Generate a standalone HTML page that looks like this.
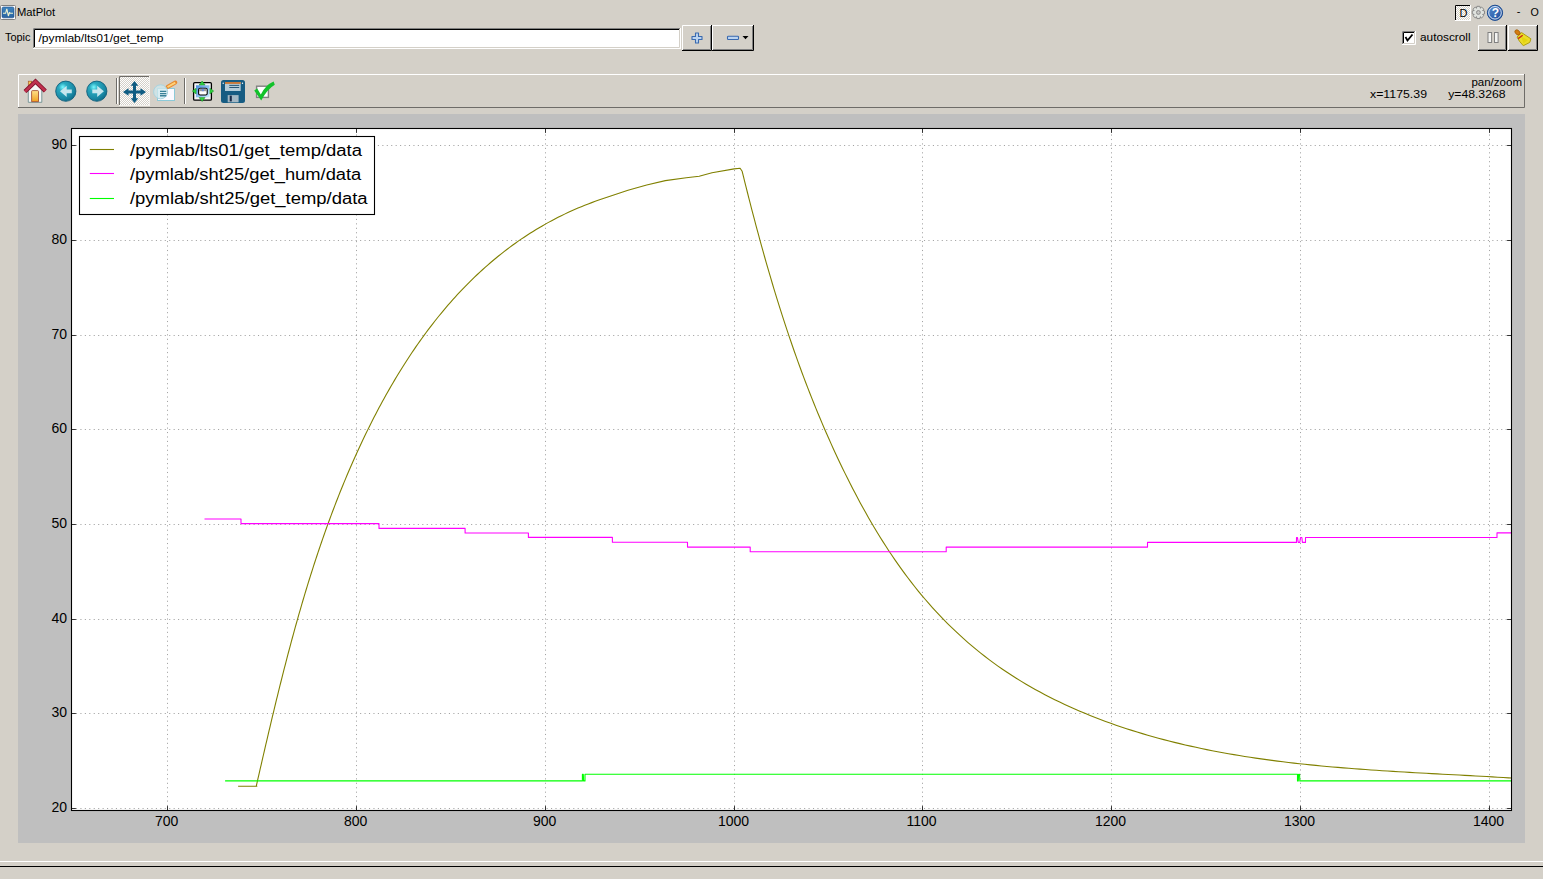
<!DOCTYPE html><html><head><meta charset="utf-8"><style>html,body{margin:0;padding:0;width:1543px;height:879px;overflow:hidden;background:#d4d0c8;font-family:"Liberation Sans",sans-serif}</style></head><body><svg width="1543" height="879" viewBox="0 0 1543 879" style="position:absolute;left:0;top:0">
<defs><pattern id="chk" width="2" height="2" patternUnits="userSpaceOnUse"><rect width="2" height="2" fill="#d4d0c8"/><rect width="1" height="1" fill="#fff"/><rect x="1" y="1" width="1" height="1" fill="#fff"/></pattern><radialGradient id="tealg" cx="0.35" cy="0.3" r="0.8"><stop offset="0" stop-color="#78f8ff"/><stop offset="0.25" stop-color="#2aaac0"/><stop offset="0.7" stop-color="#1a88a4"/><stop offset="1" stop-color="#0a6482"/></radialGradient><linearGradient id="blueg" x1="0" y1="0" x2="1" y2="1"><stop offset="0" stop-color="#5a8fd0"/><stop offset="1" stop-color="#1a4a9a"/></linearGradient><linearGradient id="doorg" x1="0" y1="0" x2="0" y2="1"><stop offset="0" stop-color="#ffe08a"/><stop offset="1" stop-color="#f0a020"/></linearGradient><clipPath id="axclip"><rect x="71.5" y="128.5" width="1440" height="682"/></clipPath></defs>
<rect width="1543" height="879" fill="#d4d0c8"/>
<rect x="0.5" y="5.5" width="15" height="14" rx="1" fill="#fff" stroke="#808080" stroke-width="1"/>
<linearGradient id="tig" x1="0" y1="0" x2="0" y2="1"><stop offset="0" stop-color="#3f85c0"/><stop offset="1" stop-color="#2a64a0"/></linearGradient><rect x="2" y="7" width="12" height="10.8" rx="1.5" fill="url(#tig)" stroke="#1a4a88" stroke-width="0.6"/>
<path d="M3,13.3 H5.6 L6.8,8.8 L8.4,16 L9.4,12.6 L10.4,13.3 H13" fill="none" stroke="#f0f4d0" stroke-width="1.1"/>
<text x="17" y="16" font-family="Liberation Sans" font-size="11" fill="#000" textLength="38" lengthAdjust="spacingAndGlyphs">MatPlot</text>
<rect x="1455" y="5" width="16" height="16" fill="url(#chk)"/>
<path d="M1455.5,21 V5.5 H1470.5" fill="none" stroke="#000" stroke-width="1"/>
<path d="M1455,20.5 H1470.5 V5" fill="none" stroke="#fff" stroke-width="1"/>
<text x="1459.5" y="17" font-family="Liberation Sans" font-size="11" fill="#000">D</text>
<path d="M1482.69,10.53 L1484.52,10.95 L1484.52,13.95 L1482.69,14.37 L1482.79,14.13 L1483.79,15.72 L1481.67,17.84 L1480.08,16.84 L1480.32,16.74 L1479.90,18.57 L1476.90,18.57 L1476.48,16.74 L1476.72,16.84 L1475.13,17.84 L1473.01,15.72 L1474.01,14.13 L1474.11,14.37 L1472.28,13.95 L1472.28,10.95 L1474.11,10.53 L1474.01,10.77 L1473.01,9.18 L1475.13,7.06 L1476.72,8.06 L1476.48,8.16 L1476.90,6.33 L1479.90,6.33 L1480.32,8.16 L1480.08,8.06 L1481.67,7.06 L1483.79,9.18 L1482.79,10.77Z" fill="#dfe2de" stroke="#858585" stroke-width="0.95" stroke-linejoin="round"/>
<circle cx="1478.4" cy="12.45" r="1.9" fill="#c8c8c6" stroke="#8a8a8a" stroke-width="1"/>
<circle cx="1495" cy="12.8" r="7.6" fill="url(#blueg)" stroke="#1a4a90" stroke-width="1"/>
<circle cx="1495" cy="12.8" r="6.3" fill="none" stroke="#fff" stroke-width="0.8"/>
<text x="1495.3" y="17.3" text-anchor="middle" font-family="Liberation Sans" font-weight="bold" font-size="12" fill="#fff">?</text>
<text x="1516.8" y="15.3" font-family="Liberation Sans" font-size="11" fill="#000">-</text>
<text x="1530.6" y="15.9" font-family="Liberation Sans" font-size="11" fill="#000" textLength="8.3" lengthAdjust="spacingAndGlyphs">O</text>
<text x="5" y="41" font-family="Liberation Sans" font-size="11" fill="#000" textLength="25.5" lengthAdjust="spacingAndGlyphs">Topic</text>
<rect x="33" y="28" width="648" height="21" fill="#fff"/>
<path d="M33.5,48 V28.5 H680" fill="none" stroke="#808080"/>
<path d="M34.5,47 V29.5 H679" fill="none" stroke="#000"/>
<path d="M34,47.5 H679.5 V29" fill="none" stroke="#d4d0c8"/>
<path d="M33,48.5 H680.5 V28" fill="none" stroke="#fff"/>
<text x="38.5" y="41.5" font-family="Liberation Sans" font-size="11" fill="#000" textLength="125" lengthAdjust="spacingAndGlyphs">/pymlab/lts01/get_temp</text>
<rect x="682" y="25" width="30" height="26" fill="#d4d0c8"/>
<path d="M682.5,50 V25.5 H711" fill="none" stroke="#fff"/>
<path d="M682,50.5 H711.5 V25" fill="none" stroke="#000" transform="translate(0,0)"/>
<path d="M683,49.5 H710.5 V26" fill="none" stroke="#808080"/>
<rect x="712" y="25" width="42" height="26" fill="#d4d0c8"/>
<path d="M712.5,50 V25.5 H753" fill="none" stroke="#fff"/>
<path d="M712,50.5 H753.5 V25" fill="none" stroke="#000" transform="translate(0,0)"/>
<path d="M713,49.5 H752.5 V26" fill="none" stroke="#808080"/>
<path d="M695.5,33 h3 v3.5 h3.5 v3 h-3.5 v3.5 h-3 v-3.5 h-3.5 v-3 h3.5z" fill="#bcd4f0" stroke="#3a6ab0" stroke-width="1.1" stroke-linejoin="round"/>
<rect x="727.5" y="36.3" width="11" height="3.2" rx="0.8" fill="#bcd4f0" stroke="#3a6ab0" stroke-width="1.1"/>
<path d="M742.5,36 h6 l-3,3.3z" fill="#000"/>
<rect x="1402" y="31" width="13" height="13" fill="#fff"/>
<path d="M1402.5,44 V31.5 H1415" fill="none" stroke="#808080"/>
<path d="M1403.5,43 V32.5 H1414" fill="none" stroke="#000"/>
<path d="M1403,43.5 H1414.5 V32" fill="none" stroke="#d4d0c8"/>
<path d="M1402,44.5 H1415.5 V31" fill="none" stroke="#fff"/>
<path d="M1405.5,37 L1407.5,40.5 L1412.5,34.5" fill="none" stroke="#000" stroke-width="1.8"/>
<text x="1420" y="40.7" font-family="Liberation Sans" font-size="11" fill="#000" textLength="50.6" lengthAdjust="spacingAndGlyphs">autoscroll</text>
<rect x="1478" y="25" width="29" height="26" fill="#d4d0c8"/>
<path d="M1478.5,50 V25.5 H1506" fill="none" stroke="#fff"/>
<path d="M1478,50.5 H1506.5 V25" fill="none" stroke="#000" transform="translate(0,0)"/>
<path d="M1479,49.5 H1505.5 V26" fill="none" stroke="#808080"/>
<rect x="1508" y="25" width="30" height="26" fill="#d4d0c8"/>
<path d="M1508.5,50 V25.5 H1537" fill="none" stroke="#fff"/>
<path d="M1508,50.5 H1537.5 V25" fill="none" stroke="#000" transform="translate(0,0)"/>
<path d="M1509,49.5 H1536.5 V26" fill="none" stroke="#808080"/>
<rect x="1488" y="32.5" width="3.6" height="10" fill="#f4f4f2" stroke="#808080" stroke-width="1"/>
<rect x="1494.5" y="32.5" width="3.6" height="10" fill="#f4f4f2" stroke="#808080" stroke-width="1"/>
<path d="M1517,37 L1521.6,32.6 L1530.9,38.8 L1529.8,42.4 L1523.3,45.7 L1519.5,41.3z" fill="#ecdc28" stroke="#b0a010" stroke-width="1" stroke-linejoin="round"/>
<path d="M1521,36.5 L1528,40 L1523.5,43.5z" fill="#e0d000" opacity="0.6"/>
<path d="M1518.1,38.6 L1522.7,35.3" stroke="#c82818" stroke-width="1.3"/>
<ellipse cx="1517.5" cy="32.4" rx="2.1" ry="3" transform="rotate(-45 1517.5 32.4)" fill="#d47c10" stroke="#a05800" stroke-width="0.7"/>
<rect x="18" y="74" width="1507" height="34" fill="#d4d0c8"/>
<path d="M18.5,107 V74.5 H1524" fill="none" stroke="#fff"/>
<path d="M18,107.5 H1524.5 V74" fill="none" stroke="#6e6c68"/>
<rect x="28.3" y="81.2" width="3.4" height="5" fill="#f8c850" stroke="#a85a30" stroke-width="0.7"/>
<path d="M28.3,89 L35.3,83 L41.8,89 V102.3 H28.3z" fill="#f6f6f6" stroke="#6e8e90" stroke-width="0.9"/>
<path d="M31.6,101.7 V91.5 Q31.6,90.6 32.5,90.6 H37.6 Q38.5,90.6 38.5,91.5 V101.7z" fill="url(#doorg)" stroke="#9a4028" stroke-width="0.8"/>
<path d="M25,91.6 L35.5,81.4 L45.3,91" fill="none" stroke="#7a1028" stroke-width="4.2" stroke-linejoin="miter"/>
<path d="M25,91.6 L35.5,81.4 L45.3,91" fill="none" stroke="#c0304e" stroke-width="2.6" stroke-linejoin="miter"/>
<circle cx="65.8" cy="91.2" r="10.1" fill="url(#tealg)" stroke="#0f5f7c" stroke-width="0.9"/>
<path d="M60,91.3 L66.7,85.7 V89.5 H71.8 V93.3 H66.7 V97.1z" fill="#c6e6ee"/>
<circle cx="96.8" cy="91.2" r="10.1" fill="url(#tealg)" stroke="#0f5f7c" stroke-width="0.9"/>
<path d="M103.9,91.3 L97.2,85.7 V89.5 H92.3 V93.3 H97.2 V97.1z" fill="#c6e6ee"/>
<rect x="116" y="78" width="1" height="26" fill="#6e6c68"/><rect x="117" y="78" width="1" height="26" fill="#fff"/>
<rect x="119" y="76" width="31" height="30" fill="url(#chk)"/>
<path d="M119.5,105 V76.5 H149" fill="none" stroke="#6e6c68"/>
<path d="M119,105.5 H149.5 V76" fill="none" stroke="#f4f2ee"/>
<path d="M134.5,81 L138.3,85.8 H136 V90.6 H140.5 V88.2 L146,92 L140.5,95.8 V93.4 H136 V98.2 H138.3 L134.5,103 L130.7,98.2 H133 V93.4 H128.5 V95.8 L123,92 L128.5,88.2 V90.6 H133 V85.8 H130.7z" fill="#0f5c82"/>
<rect x="157.5" y="88.5" width="17" height="12" fill="#fbfaff" stroke="#8ccad8" stroke-width="1"/>
<path d="M167.5,87 L175.3,82.6" stroke="#e88a30" stroke-width="4" stroke-linecap="round"/>
<path d="M167.5,87 L175.3,82.6" stroke="#ffd27a" stroke-width="2"/>
<circle cx="160.6" cy="91.8" r="7" fill="#cfe8ee" fill-opacity="0.75" stroke="#a8d4e0" stroke-width="1"/>
<path d="M160,91.4 h6.3 M160,93.6 h6.3 M160,95.7 h6.3" stroke="#3a8098" stroke-width="1.4"/>
<rect x="184" y="78" width="1" height="26" fill="#6e6c68"/><rect x="185" y="78" width="1" height="26" fill="#fff"/>
<rect x="193.6" y="82.6" width="17.8" height="17.6" rx="1.2" fill="#f4f4f4" stroke="#000" stroke-width="1.3"/>
<linearGradient id="spg" x1="0" y1="0" x2="1" y2="1"><stop offset="0" stop-color="#4a8ee0"/><stop offset="1" stop-color="#c8ecff"/></linearGradient>
<rect x="196" y="85.3" width="13.5" height="12" fill="url(#spg)"/>
<rect x="198.6" y="88.2" width="8.6" height="6.8" rx="1.5" fill="#fff" stroke="#000" stroke-width="1.1"/>
<rect x="199.2" y="88.8" width="7.4" height="2.4" fill="#9a9a9a"/><rect x="201.8" y="88.8" width="2" height="2.4" fill="#6a8ad8"/>
<path d="M202.1,81 l-3,4 h6z M202.1,101.5 l-3,-4 h6z M192.3,91.1 l3.8,-2.9 v5.8z M213.7,91.1 l-3.8,-2.9 v5.8z" fill="#30d040" stroke="#158a20" stroke-width="0.5"/>
<rect x="221" y="80" width="24" height="23" rx="2.5" fill="#175c82"/>
<rect x="225" y="82" width="15.7" height="9" fill="#b4ccd8"/>
<rect x="225" y="82" width="15.7" height="1.9" fill="#c87838"/>
<path d="M229.3,85.4 h9.9 M229.3,87.5 h9.9" stroke="#1a4a6a" stroke-width="0.9"/>
<rect x="227.7" y="95.1" width="10.9" height="7.2" fill="#a4b8c4"/>
<rect x="229.7" y="95.6" width="2.1" height="5.8" fill="#1a2a48"/>
<circle cx="223.2" cy="83.2" r="0.7" fill="#fff"/><circle cx="242.5" cy="83.2" r="0.7" fill="#fff"/>
<rect x="256.6" y="86.2" width="11.8" height="11.2" fill="#fff" stroke="#808080" stroke-width="1.4"/>
<path d="M254.2,90.6 L257.2,88.6 L260.8,94.6 Q265.5,85 273.6,81.6 L274.8,84.8 Q267.5,89 261.2,100.4z" fill="#12c22a"/>
<text x="1522" y="85.7" text-anchor="end" font-family="Liberation Sans" font-size="11" fill="#000" textLength="50.6" lengthAdjust="spacingAndGlyphs">pan/zoom</text>
<text x="1370" y="98.2" font-family="Liberation Sans" font-size="11" fill="#000" textLength="57" lengthAdjust="spacingAndGlyphs">x=1175.39</text>
<text x="1448.2" y="98.2" font-family="Liberation Sans" font-size="11" fill="#000" textLength="57.3" lengthAdjust="spacingAndGlyphs">y=48.3268</text>
<rect x="18" y="114" width="1507" height="729" fill="#bfbfbf"/>
<rect x="71.5" y="128.5" width="1440.0" height="682.0" fill="#fff"/>
<path d="M167.50,810.5 V128.5 M356.50,810.5 V128.5 M545.50,810.5 V128.5 M734.50,810.5 V128.5 M922.50,810.5 V128.5 M1111.50,810.5 V128.5 M1300.50,810.5 V128.5 M1489.50,810.5 V128.5 M71.5,145.50 H1511.5 M71.5,240.50 H1511.5 M71.5,335.50 H1511.5 M71.5,429.50 H1511.5 M71.5,524.50 H1511.5 M71.5,619.50 H1511.5 M71.5,713.50 H1511.5 M71.5,808.50 H1511.5" fill="none" stroke="#000" stroke-opacity="0.36" stroke-width="1" stroke-dasharray="1.11 3.33"/>
<g clip-path="url(#axclip)" fill="none" stroke-width="1.1" stroke-linejoin="round">
<path d="M238.10,786.30 L256.80,786.30 L256.39,785.53 L257.17,782.12 L257.95,778.71 L258.73,775.29 L259.52,771.87 L260.30,768.45 L261.09,765.03 L261.88,761.61 L262.67,758.18 L263.46,754.75 L264.25,751.32 L265.05,747.89 L265.85,744.46 L266.65,741.03 L267.45,737.59 L268.26,734.15 L269.07,730.72 L269.88,727.28 L270.69,723.84 L271.51,720.40 L272.33,716.95 L273.15,713.51 L273.98,710.07 L274.81,706.62 L275.65,703.18 L276.48,699.73 L277.33,696.29 L278.17,692.84 L279.02,689.40 L279.88,685.95 L280.74,682.50 L281.60,679.06 L282.47,675.61 L283.35,672.17 L284.23,668.72 L285.11,665.28 L286.00,661.83 L286.90,658.39 L287.80,654.94 L288.70,651.50 L289.62,648.06 L290.54,644.62 L291.46,641.18 L292.39,637.74 L293.33,634.30 L294.27,630.87 L295.22,627.43 L296.18,624.00 L297.14,620.56 L298.11,617.13 L299.09,613.71 L300.07,610.28 L301.07,606.85 L302.07,603.43 L303.07,600.01 L304.09,596.59 L305.11,593.17 L306.14,589.76 L307.18,586.34 L308.23,582.93 L309.29,579.52 L310.35,576.12 L311.42,572.72 L312.51,569.32 L313.60,565.92 L314.70,562.53 L315.81,559.13 L316.93,555.75 L318.05,552.36 L319.19,548.98 L320.34,545.60 L321.49,542.23 L322.66,538.86 L323.84,535.49 L325.03,532.12 L326.22,528.76 L327.43,525.41 L328.65,522.05 L329.88,518.71 L331.12,515.36 L332.37,512.02 L333.63,508.69 L334.91,505.35 L336.19,502.03 L337.49,498.70 L338.80,495.39 L340.12,492.07 L341.45,488.76 L342.79,485.46 L344.15,482.16 L345.52,478.87 L346.90,475.58 L348.29,472.30 L349.70,469.02 L351.12,465.75 L352.55,462.48 L353.99,459.22 L355.45,455.96 L356.92,452.71 L358.41,449.47 L359.91,446.23 L361.42,442.99 L362.94,439.77 L364.48,436.55 L366.04,433.33 L367.61,430.12 L369.19,426.92 L370.78,423.73 L372.40,420.54 L374.02,417.36 L375.66,414.19 L377.32,411.02 L378.99,407.86 L380.68,404.71 L382.38,401.57 L384.10,398.44 L385.83,395.32 L387.58,392.21 L389.35,389.11 L391.13,386.02 L392.93,382.94 L394.74,379.87 L396.58,376.81 L398.42,373.77 L400.29,370.73 L402.17,367.71 L404.07,364.70 L405.99,361.70 L407.92,358.72 L409.87,355.75 L411.84,352.79 L413.83,349.85 L415.84,346.93 L417.86,344.01 L419.90,341.12 L421.96,338.23 L424.04,335.37 L426.14,332.52 L428.26,329.68 L430.39,326.86 L432.55,324.06 L434.72,321.28 L436.91,318.52 L439.13,315.77 L441.36,313.04 L443.61,310.33 L445.89,307.64 L448.18,304.96 L450.49,302.31 L452.83,299.68 L455.18,297.06 L457.56,294.47 L459.96,291.90 L462.37,289.34 L464.81,286.81 L467.27,284.31 L469.75,281.82 L472.26,279.35 L474.78,276.91 L477.33,274.49 L479.90,272.10 L482.49,269.73 L485.10,267.38 L487.73,265.05 L490.39,262.75 L493.07,260.48 L495.78,258.23 L498.50,256.00 L501.25,253.81 L504.03,251.63 L506.83,249.49 L509.65,247.37 L512.49,245.27 L515.36,243.21 L518.25,241.17 L521.17,239.16 L524.11,237.18 L527.07,235.23 L530.06,233.30 L533.08,231.41 L536.11,229.54 L539.18,227.70 L542.27,225.90 L545.38,224.12 L548.52,222.38 L551.69,220.66 L554.88,218.98 L558.10,217.33 L561.34,215.71 L564.61,214.12 L567.91,212.57 L571.23,211.05 L574.58,209.56 L577.95,208.11 L581.36,206.69 L584.78,205.30 L588.24,203.95 L591.72,202.63 L595.24,201.35 L598.78,200.10 L628.00,190.20 L646.70,185.00 L665.30,180.60 L686.30,177.80 L699.20,176.20 L712.00,172.70 L734.20,168.90 L740.10,168.20 L742.16,171.32 L743.48,176.68 L744.81,182.04 L746.15,187.40 L747.50,192.75 L748.85,198.10 L750.22,203.45 L751.60,208.80 L752.99,214.14 L754.40,219.48 L755.81,224.82 L757.24,230.15 L758.68,235.48 L760.13,240.81 L761.60,246.13 L763.08,251.45 L764.57,256.76 L766.08,262.07 L767.61,267.37 L769.15,272.67 L770.70,277.97 L772.27,283.25 L773.86,288.54 L775.47,293.82 L777.09,299.09 L778.73,304.35 L780.39,309.61 L782.06,314.87 L783.76,320.11 L785.47,325.35 L787.21,330.59 L788.96,335.81 L790.74,341.03 L792.53,346.24 L794.35,351.45 L796.18,356.64 L798.04,361.83 L799.92,367.01 L801.83,372.19 L803.75,377.35 L805.70,382.50 L807.67,387.65 L809.67,392.79 L811.69,397.92 L813.74,403.03 L815.81,408.14 L817.90,413.24 L820.03,418.33 L822.17,423.41 L824.35,428.48 L826.55,433.54 L828.78,438.59 L831.04,443.63 L833.32,448.65 L835.63,453.67 L837.97,458.67 L840.35,463.67 L842.75,468.65 L845.18,473.62 L847.64,478.57 L850.13,483.52 L852.65,488.45 L855.21,493.36 L857.80,498.26 L860.42,503.14 L863.08,508.00 L865.78,512.84 L868.51,517.66 L871.29,522.46 L874.10,527.23 L876.95,531.98 L879.84,536.70 L882.77,541.39 L885.75,546.05 L888.77,550.68 L891.84,555.28 L894.95,559.85 L898.10,564.38 L901.31,568.88 L904.56,573.34 L907.86,577.76 L911.21,582.14 L914.61,586.49 L918.06,590.79 L921.57,595.04 L925.13,599.26 L928.74,603.42 L932.41,607.54 L936.13,611.62 L939.90,615.64 L943.72,619.61 L947.59,623.53 L951.52,627.40 L955.49,631.21 L959.52,634.97 L963.60,638.67 L967.72,642.31 L971.90,645.90 L976.12,649.42 L980.40,652.88 L984.72,656.28 L989.09,659.61 L993.50,662.88 L997.97,666.08 L1002.48,669.22 L1007.03,672.30 L1011.63,675.31 L1016.26,678.26 L1020.94,681.15 L1025.66,683.97 L1030.42,686.74 L1035.21,689.44 L1040.04,692.09 L1044.91,694.68 L1049.81,697.21 L1054.74,699.68 L1059.70,702.10 L1064.70,704.46 L1069.72,706.77 L1074.77,709.02 L1079.84,711.22 L1084.95,713.36 L1090.07,715.45 L1095.22,717.49 L1100.39,719.48 L1105.58,721.42 L1110.80,723.31 L1116.03,725.15 L1121.27,726.94 L1126.54,728.69 L1131.82,730.38 L1137.11,732.03 L1142.41,733.64 L1147.73,735.20 L1153.06,736.71 L1158.39,738.19 L1163.74,739.62 L1169.09,741.00 L1174.45,742.35 L1179.82,743.65 L1185.19,744.92 L1190.57,746.14 L1195.96,747.33 L1201.36,748.48 L1206.76,749.59 L1212.17,750.67 L1217.58,751.71 L1223.00,752.72 L1228.43,753.70 L1233.86,754.64 L1239.30,755.55 L1244.75,756.43 L1250.20,757.28 L1255.65,758.10 L1261.11,758.89 L1266.57,759.65 L1272.04,760.39 L1277.51,761.10 L1282.99,761.79 L1288.47,762.45 L1293.95,763.08 L1299.44,763.70 L1304.93,764.29 L1310.42,764.86 L1315.92,765.41 L1321.41,765.94 L1326.92,766.45 L1332.42,766.94 L1337.92,767.41 L1343.43,767.87 L1348.94,768.31 L1354.45,768.74 L1359.97,769.15 L1365.48,769.55 L1370.99,769.94 L1376.51,770.32 L1382.03,770.68 L1387.54,771.03 L1393.06,771.38 L1398.58,771.71 L1404.09,772.04 L1409.61,772.36 L1415.13,772.68 L1420.64,772.99 L1426.16,773.29 L1431.67,773.59 L1437.19,773.89 L1442.70,774.18 L1448.21,774.48 L1453.71,774.77 L1459.22,775.06 L1464.72,775.36 L1470.23,775.65 L1475.72,775.95 L1481.22,776.25 L1486.71,776.56 L1492.20,776.87 L1497.69,777.19 L1503.18,777.51 L1508.66,777.84 L1511.39,778.01" stroke="#808000"/>
<path d="M204.50,519.00 L241.00,519.00 L241.00,523.60 L379.00,523.60 L379.00,528.40 L465.10,528.40 L465.10,533.00 L528.40,533.00 L528.40,537.40 L612.40,537.40 L612.40,542.20 L687.50,542.20 L687.50,547.10 L750.20,547.10 L750.20,551.80 L946.20,551.80 L946.20,547.10 L1147.50,547.10 L1147.50,542.40 L1296.50,542.40 L1296.50,537.50 L1297.50,537.50 L1298.20,542.40 L1299.80,542.40 L1300.50,537.50 L1301.90,537.50 L1302.40,542.40 L1305.50,542.40 L1305.50,537.50 L1497.00,537.50 L1497.00,532.90 L1511.50,532.90" stroke="#ff00ff"/>
<path d="M225.10,780.90 L582.40,780.90 L582.40,774.20 L583.30,774.20 L583.60,780.90 L585.00,780.90 L585.00,774.20 L1297.50,774.20 L1297.50,780.90 L1298.30,780.90 L1298.60,774.20 L1299.60,774.20 L1299.80,780.90 L1511.50,780.90" stroke="#00ff00"/>
</g>
<path d="M167.50,810.5 v-4.4 M167.50,128.5 v4.4 M356.50,810.5 v-4.4 M356.50,128.5 v4.4 M545.50,810.5 v-4.4 M545.50,128.5 v4.4 M734.50,810.5 v-4.4 M734.50,128.5 v4.4 M922.50,810.5 v-4.4 M922.50,128.5 v4.4 M1111.50,810.5 v-4.4 M1111.50,128.5 v4.4 M1300.50,810.5 v-4.4 M1300.50,128.5 v4.4 M1489.50,810.5 v-4.4 M1489.50,128.5 v4.4 M71.5,145.50 h4.4 M1511.5,145.50 h-4.4 M71.5,240.50 h4.4 M1511.5,240.50 h-4.4 M71.5,335.50 h4.4 M1511.5,335.50 h-4.4 M71.5,429.50 h4.4 M1511.5,429.50 h-4.4 M71.5,524.50 h4.4 M1511.5,524.50 h-4.4 M71.5,619.50 h4.4 M1511.5,619.50 h-4.4 M71.5,713.50 h4.4 M1511.5,713.50 h-4.4 M71.5,808.50 h4.4 M1511.5,808.50 h-4.4" stroke="#333" stroke-width="1"/>
<rect x="71.5" y="128.5" width="1440.0" height="682.0" fill="none" stroke="#000" stroke-width="1.1"/>
<text x="166.60" y="826" text-anchor="middle" font-family="Liberation Sans" font-size="14" fill="#000">700</text>
<text x="355.60" y="826" text-anchor="middle" font-family="Liberation Sans" font-size="14" fill="#000">800</text>
<text x="544.60" y="826" text-anchor="middle" font-family="Liberation Sans" font-size="14" fill="#000">900</text>
<text x="733.60" y="826" text-anchor="middle" font-family="Liberation Sans" font-size="14" fill="#000">1000</text>
<text x="921.60" y="826" text-anchor="middle" font-family="Liberation Sans" font-size="14" fill="#000">1100</text>
<text x="1110.60" y="826" text-anchor="middle" font-family="Liberation Sans" font-size="14" fill="#000">1200</text>
<text x="1299.60" y="826" text-anchor="middle" font-family="Liberation Sans" font-size="14" fill="#000">1300</text>
<text x="1488.60" y="826" text-anchor="middle" font-family="Liberation Sans" font-size="14" fill="#000">1400</text>
<text x="67" y="149.10" text-anchor="end" font-family="Liberation Sans" font-size="14" fill="#000">90</text>
<text x="67" y="244.10" text-anchor="end" font-family="Liberation Sans" font-size="14" fill="#000">80</text>
<text x="67" y="339.10" text-anchor="end" font-family="Liberation Sans" font-size="14" fill="#000">70</text>
<text x="67" y="433.10" text-anchor="end" font-family="Liberation Sans" font-size="14" fill="#000">60</text>
<text x="67" y="528.10" text-anchor="end" font-family="Liberation Sans" font-size="14" fill="#000">50</text>
<text x="67" y="623.10" text-anchor="end" font-family="Liberation Sans" font-size="14" fill="#000">40</text>
<text x="67" y="717.10" text-anchor="end" font-family="Liberation Sans" font-size="14" fill="#000">30</text>
<text x="67" y="812.10" text-anchor="end" font-family="Liberation Sans" font-size="14" fill="#000">20</text>
<rect x="79.5" y="136.5" width="295" height="78" fill="#fff" stroke="#000" stroke-width="1.1"/>
<path d="M89.8,149.5 H114" stroke="#808000" stroke-width="1.1"/>
<text x="130" y="155.9" font-family="Liberation Sans" font-size="16" fill="#000" textLength="232" lengthAdjust="spacingAndGlyphs">/pymlab/lts01/get_temp/data</text>
<path d="M89.8,173.5 H114" stroke="#ff00ff" stroke-width="1.1"/>
<text x="130" y="179.9" font-family="Liberation Sans" font-size="16" fill="#000" textLength="231.3" lengthAdjust="spacingAndGlyphs">/pymlab/sht25/get_hum/data</text>
<path d="M89.8,198.5 H114" stroke="#00ff00" stroke-width="1.1"/>
<text x="130" y="203.9" font-family="Liberation Sans" font-size="16" fill="#000" textLength="237.5" lengthAdjust="spacingAndGlyphs">/pymlab/sht25/get_temp/data</text>
<rect x="0" y="861" width="1543" height="1" fill="#fff"/>
<rect x="0" y="866" width="1543" height="1" fill="#000"/>
</svg></body></html>
